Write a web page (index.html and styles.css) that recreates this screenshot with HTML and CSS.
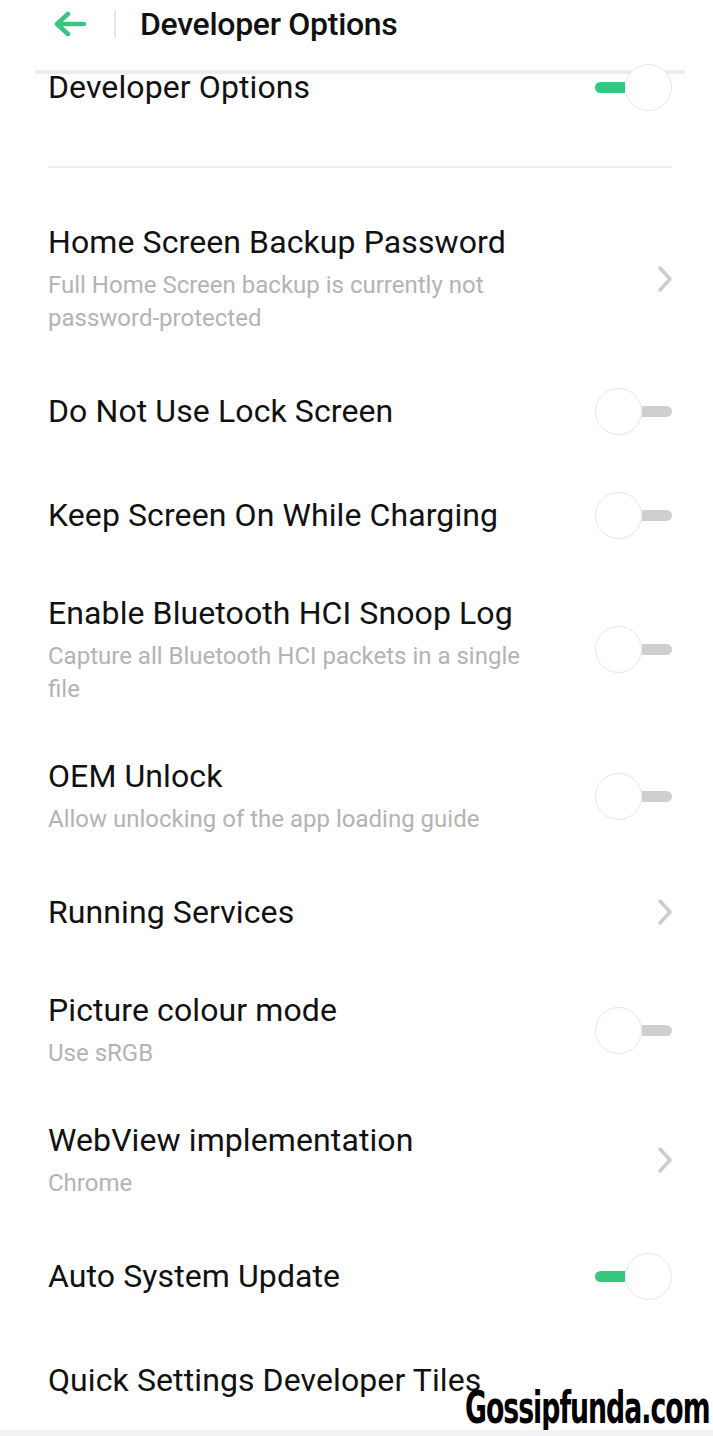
FILE: index.html
```html
<!DOCTYPE html>
<html lang="en">
<head>
    <meta charset="UTF-8">
    <meta name="viewport" content="width=device-width, initial-scale=1.0">
    <title>Developer Options</title>
    <link rel="stylesheet" href="styles.css">
</head>
<body>
    <div class="header">
        <svg class="back" width="34" height="26" viewBox="0 0 34 26">
            <path d="M31 13H5M15 3L4 13l11 10" fill="none" stroke="#37c57f" stroke-width="4.5" stroke-linecap="round" stroke-linejoin="round"/>
        </svg>
        <div class="sep"></div>
        <h1>Developer Options</h1>
    </div>
    <div class="shade"></div>

    <div class="list">
        <div class="row top">
            <div class="text"><div class="title">Developer Options</div></div>
            <div class="switch on"><span class="track"></span><span class="knob"></span></div>
        </div>
        <div class="divider"></div>

        <div class="row sub">
            <div class="text">
                <div class="title">Home Screen Backup Password</div>
                <div class="desc">Full Home Screen backup is currently not<br>password-protected</div>
            </div>
            <svg class="chev" width="18" height="30" viewBox="0 0 18 30"><path d="M4 4l10 11L4 26" fill="none" stroke="#cdcdcd" stroke-width="3.5" stroke-linecap="round" stroke-linejoin="round"/></svg>
        </div>

        <div class="row">
            <div class="text"><div class="title">Do Not Use Lock Screen</div></div>
            <div class="switch"><span class="knob"></span><span class="track"></span></div>
        </div>

        <div class="row">
            <div class="text"><div class="title">Keep Screen On While Charging</div></div>
            <div class="switch"><span class="knob"></span><span class="track"></span></div>
        </div>

        <div class="row sub">
            <div class="text">
                <div class="title">Enable Bluetooth HCI Snoop Log</div>
                <div class="desc">Capture all Bluetooth HCI packets in a single<br>file</div>
            </div>
            <div class="switch"><span class="knob"></span><span class="track"></span></div>
        </div>

        <div class="row sub">
            <div class="text">
                <div class="title">OEM Unlock</div>
                <div class="desc">Allow unlocking of the app loading guide</div>
            </div>
            <div class="switch"><span class="knob"></span><span class="track"></span></div>
        </div>

        <div class="row">
            <div class="text"><div class="title">Running Services</div></div>
            <svg class="chev" width="18" height="30" viewBox="0 0 18 30"><path d="M4 4l10 11L4 26" fill="none" stroke="#cdcdcd" stroke-width="3.5" stroke-linecap="round" stroke-linejoin="round"/></svg>
        </div>

        <div class="row sub">
            <div class="text">
                <div class="title">Picture colour mode</div>
                <div class="desc">Use sRGB</div>
            </div>
            <div class="switch"><span class="knob"></span><span class="track"></span></div>
        </div>

        <div class="row sub">
            <div class="text">
                <div class="title">WebView implementation</div>
                <div class="desc">Chrome</div>
            </div>
            <svg class="chev" width="18" height="30" viewBox="0 0 18 30"><path d="M4 4l10 11L4 26" fill="none" stroke="#cdcdcd" stroke-width="3.5" stroke-linecap="round" stroke-linejoin="round"/></svg>
        </div>

        <div class="row">
            <div class="text"><div class="title">Auto System Update</div></div>
            <div class="switch on"><span class="track"></span><span class="knob"></span></div>
        </div>

        <div class="row">
            <div class="text"><div class="title">Quick Settings Developer Tiles</div></div>
        </div>
    </div>

    <div class="watermark">Gossipfunda.com</div>
    <div class="bottom"></div>
</body>
</html>
```
FILE: styles.css
```css
body {
    margin: 0;
    width: 713px;
    height: 1436px;
    overflow: hidden;
    background: #fff;
    font-family: Roboto, "Noto Sans", sans-serif;
    color: #111;
    position: relative;
}
.header {
    height: 48px;
    display: flex;
    align-items: center;
    padding-left: 53px;
}
.back {
    display: block;
}
.sep {
    width: 2px;
    height: 28px;
    background: #e6e6e6;
    margin: 0 24px 0 27px;
}
.header h1 {
    margin: 0;
    font-size: 32px;
    font-weight: 500;
    color: #111;
    letter-spacing: -0.3px;
}
.shade {
    height: 22px;
}
.list {
    border-top: 4px solid #ececec;
    margin-left: 35px;
    margin-right: 28px;
    padding-left: 13px;
    padding-right: 13px;
}
.row {
    display: flex;
    align-items: center;
    justify-content: space-between;
    height: 104px;
}
.row.top {
    height: 30px;
    margin-top: -2px;
}
.row.sub {
    height: auto;
    padding: 26px 0 24px;
}
.divider {
    height: 2px;
    background: #eeeeee;
    margin: 64px 0 28px;
}
.title {
    font-size: 32px;
    line-height: 40px;
    color: #111;
    letter-spacing: 0.1px;
}
.desc {
    font-size: 24px;
    line-height: 33px;
    color: #b3b3b3;
    margin-top: 7px;
}
.chev {
    display: block;
    margin-right: -2px;
}
.switch {
    display: flex;
    align-items: center;
    width: 77px;
}
.knob {
    width: 45px;
    height: 45px;
    border: 1.5px solid #e6e6e6;
    border-radius: 50%;
    background: #fff;
    flex: none;
}
.track {
    width: 30px;
    height: 11px;
    background: #cfcfcf;
    border-radius: 0 6px 6px 0;
    flex: none;
}
.switch.on .track {
    background: #34c77f;
    border-radius: 6px 0 0 6px;
}
.watermark {
    position: absolute;
    right: 3px;
    top: 1388px;
    font-family: "DejaVu Sans Condensed", "Liberation Sans Narrow", sans-serif;
    font-weight: bold;
    font-size: 45px;
    line-height: 40px;
    color: #000;
    letter-spacing: -1.5px;
    transform: scaleX(0.66);
    transform-origin: right;
}
.bottom {
    position: absolute;
    left: 0;
    right: 0;
    bottom: 0;
    height: 6px;
    background: #f2f2f2;
}
```
